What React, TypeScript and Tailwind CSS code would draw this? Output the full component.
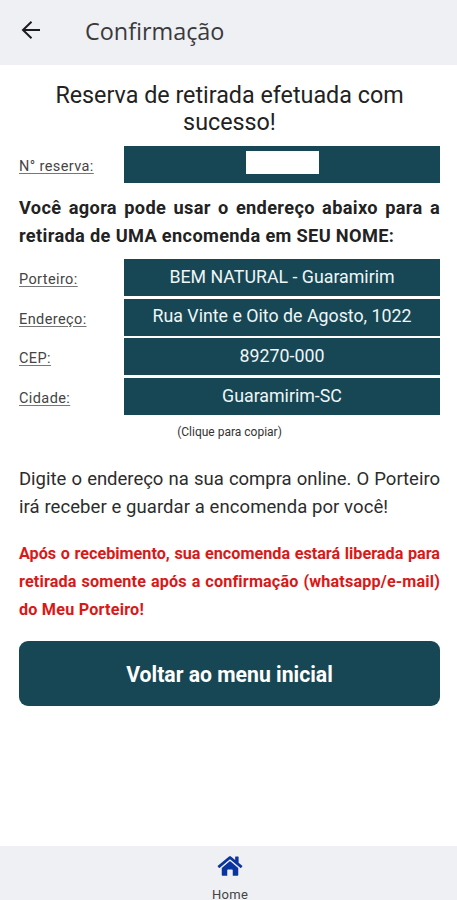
import type { ReactNode } from 'react';

const rows = [
  { label: 'Porteiro:', value: 'BEM NATURAL - Guaramirim' },
  { label: 'Endereço:', value: 'Rua Vinte e Oito de Agosto, 1022' },
  { label: 'CEP:', value: '89270-000' },
  { label: 'Cidade:', value: 'Guaramirim-SC' },
];

function Row({ label, children }: { label: string; children: ReactNode }) {
  return (
    <div className="flex h-[37px] items-center">
      <span className="w-[105px] shrink-0 pt-[5px] text-[14.5px] leading-5 tracking-[0.4px] text-[#444] underline decoration-[#777] underline-offset-2">{label}</span>
      <div className="flex h-full flex-1 items-center justify-center bg-[#174754] pb-px text-[17.8px] whitespace-nowrap text-[#eef6f8]">{children}</div>
    </div>
  );
}

export default function App() {
  return (
    <div className="flex h-[900px] w-[457px] flex-col overflow-hidden bg-white font-['Roboto',sans-serif] text-[#222]">
      <header className="flex h-[65px] shrink-0 items-center bg-[#eff0f4] pl-[21px]">
        <svg width="20" height="20" viewBox="0 0 20 20" fill="none" stroke="#1c1c1e" strokeWidth="2" className="-mt-[5px]">
          <path d="M19 10H2M10.5 1.8L2 10l8.5 8.2" />
        </svg>
        <h1 className="-mt-[2px] ml-[44px] font-['Open_Sans',sans-serif] text-[23.4px] text-[#3a3a3c]">Confirmação</h1>
      </header>
      <main className="flex flex-1 flex-col pt-[17px] pr-[17px] pl-[19px]">
        <h2 className="text-center text-[23.3px] leading-[27px]">Reserva de retirada efetuada com<br />sucesso!</h2>
        <div className="mt-[10px]">
          <Row label="N° reserva:"><div className="mb-[3px] h-[23px] w-[73px] bg-white" /></Row>
        </div>
        <p className="mt-[11px] text-justify text-[18.2px] leading-7 font-bold tracking-[0.35px]">Você agora pode usar o endereço abaixo para a retirada de UMA encomenda em SEU NOME:</p>
        <div className="mt-[9px] flex flex-col gap-[2.67px]">
          {rows.map((row) => <Row key={row.label} label={row.label}>{row.value}</Row>)}
        </div>
        <p className="mt-[9px] text-center text-[12px] leading-4 text-[#333]">(Clique para copiar)</p>
        <p className="mt-[25px] text-justify text-[18.5px] leading-7 whitespace-nowrap text-[#2c2c2c]">
          <span className="block tracking-[-0.02px] [text-align-last:justify] [word-spacing:-1px]">Digite o endereço na sua compra online. O Porteiro</span>
          <span className="block tracking-[0.08px]">irá receber e guardar a encomenda por você!</span>
        </p>
        <p className="mt-[19px] text-[16.2px] leading-7 font-bold text-[#dc1717]">
          <span className="block whitespace-nowrap [text-align-last:justify] [word-spacing:-1px]">Após o recebimento, sua encomenda estará liberada para</span>
          <span className="block whitespace-nowrap tracking-[0.15px] [text-align-last:justify]">retirada somente após a confirmação (whatsapp/e-mail)</span>
          <span className="block tracking-[0.2px]">do Meu Porteiro!</span>
        </p>
        <button className="mt-[17px] h-[65px] rounded-[9px] bg-[#174754] pt-0.5 text-[21.2px] font-bold text-white">Voltar ao menu inicial</button>
      </main>
      <footer className="flex h-[54px] shrink-0 flex-col items-center bg-[#eff0f4] pt-[9px] pl-[3px]">
        <svg width="26" height="22" viewBox="0 0 576 512" fill="#0b359e" className="shrink-0">
          <path d="M280 148 96 300v164c0 9 7 16 16 16h112V352c0-9 7-16 16-16h96c9 0 16 7 16 16v128h112c9 0 16-7 16-16V300L296 148c-5-4-11-4-16 0zm292 103-84-69V44c0-7-5-12-12-12h-56c-7 0-12 5-12 12v72l-90-74c-18-14-42-14-60 0L5 251c-5 4-6 12-2 17l25 31c4 5 12 6 17 2L280 107c5-4 11-4 16 0l235 194c5 4 13 3 17-2l26-31c4-5 3-13-2-17z" />
        </svg>
        <span className="mt-[13px] shrink-0 text-[13px] leading-[10px] tracking-[0.3px] text-[#444]">Home</span>
      </footer>
    </div>
  );
}
